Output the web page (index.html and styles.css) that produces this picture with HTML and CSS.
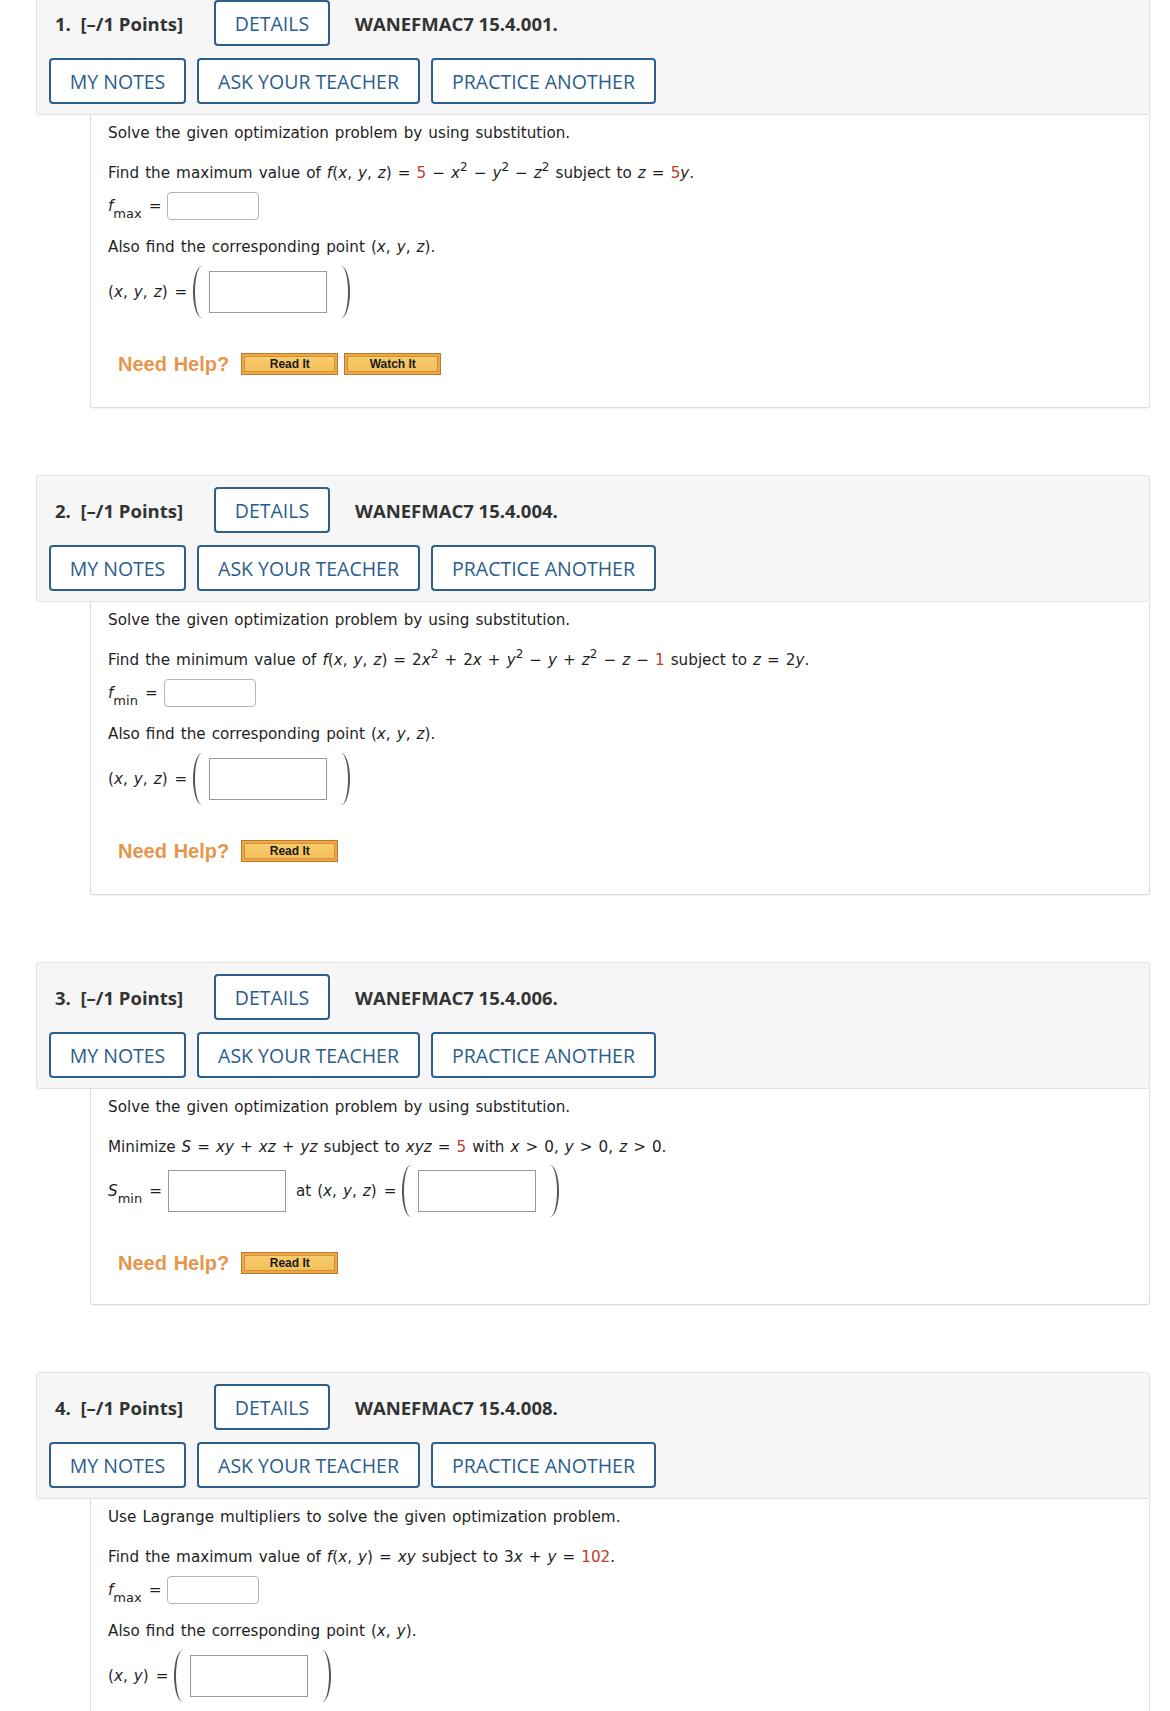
FILE: index.html
```html
<!DOCTYPE html>
<html lang="en">
<head>
  <meta charset="UTF-8" />
  <title>WebAssign - Optimization</title>
  <link rel="stylesheet" href="styles.css">
</head>
<body>
  <div class="page">

    <div class="question">
      <div class="q-head">
        <div class="q-row">
          <span class="q-num">1.&nbsp; [–/1 Points]</span>
          <button class="wa-btn details">DETAILS</button>
          <span class="q-code">WANEFMAC7 15.4.001.</span>
        </div>
        <div class="q-row">
          <button class="wa-btn notes">MY NOTES</button>
          <button class="wa-btn ask">ASK YOUR TEACHER</button>
          <button class="wa-btn practice">PRACTICE ANOTHER</button>
        </div>
      </div>
      <div class="q-body">
        <div class="line first">Solve the given optimization problem by using substitution.</div>
        <div class="line">Find the maximum value of <i>f</i>(<i>x</i>, <i>y</i>, <i>z</i>) = <span class="red">5</span> − <i>x</i><sup>2</sup> − <i>y</i><sup>2</sup> − <i>z</i><sup>2</sup> subject to <i>z</i> = <span class="red">5</span><i>y</i>.</div>
        <div class="ans-row small">
          <span><i>f</i><sub>max</sub></span><span class="eq">=</span><span class="box round"></span>
        </div>
        <div class="line after">Also find the corresponding point (<i>x</i>, <i>y</i>, <i>z</i>).</div>
        <div class="ans-row tall">
          <span>(<i>x</i>, <i>y</i>, <i>z</i>)</span><span class="eq">=</span>
          <span class="paren left"></span><span class="box wide"></span><span class="paren right"></span>
        </div>
        <div class="help">
          <span class="help-label">Need Help?</span>
          <button class="help-btn">Read It</button>
          <button class="help-btn">Watch It</button>
        </div>
      </div>
    </div>

    <div class="question">
      <div class="q-head">
        <div class="q-row">
          <span class="q-num">2.&nbsp; [–/1 Points]</span>
          <button class="wa-btn details">DETAILS</button>
          <span class="q-code">WANEFMAC7 15.4.004.</span>
        </div>
        <div class="q-row">
          <button class="wa-btn notes">MY NOTES</button>
          <button class="wa-btn ask">ASK YOUR TEACHER</button>
          <button class="wa-btn practice">PRACTICE ANOTHER</button>
        </div>
      </div>
      <div class="q-body">
        <div class="line first">Solve the given optimization problem by using substitution.</div>
        <div class="line">Find the minimum value of <i>f</i>(<i>x</i>, <i>y</i>, <i>z</i>) = 2<i>x</i><sup>2</sup> + 2<i>x</i> + <i>y</i><sup>2</sup> − <i>y</i> + <i>z</i><sup>2</sup> − <i>z</i> − <span class="red">1</span> subject to <i>z</i> = 2<i>y</i>.</div>
        <div class="ans-row small">
          <span><i>f</i><sub>min</sub></span><span class="eq">=</span><span class="box round"></span>
        </div>
        <div class="line after">Also find the corresponding point (<i>x</i>, <i>y</i>, <i>z</i>).</div>
        <div class="ans-row tall">
          <span>(<i>x</i>, <i>y</i>, <i>z</i>)</span><span class="eq">=</span>
          <span class="paren left"></span><span class="box wide"></span><span class="paren right"></span>
        </div>
        <div class="help">
          <span class="help-label">Need Help?</span>
          <button class="help-btn">Read It</button>
        </div>
      </div>
    </div>

    <div class="question">
      <div class="q-head">
        <div class="q-row">
          <span class="q-num">3.&nbsp; [–/1 Points]</span>
          <button class="wa-btn details">DETAILS</button>
          <span class="q-code">WANEFMAC7 15.4.006.</span>
        </div>
        <div class="q-row">
          <button class="wa-btn notes">MY NOTES</button>
          <button class="wa-btn ask">ASK YOUR TEACHER</button>
          <button class="wa-btn practice">PRACTICE ANOTHER</button>
        </div>
      </div>
      <div class="q-body short">
        <div class="line first">Solve the given optimization problem by using substitution.</div>
        <div class="line">Minimize <i>S</i> = <i>xy</i> + <i>xz</i> + <i>yz</i> subject to <i>xyz</i> = <span class="red">5</span> with <i>x</i> &gt; 0, <i>y</i> &gt; 0, <i>z</i> &gt; 0.</div>
        <div class="ans-row tall inline">
          <span><i>S</i><sub>min</sub></span><span class="eq">=</span><span class="box wide"></span>
          <span class="at">at (<i>x</i>, <i>y</i>, <i>z</i>)</span><span class="eq">=</span>
          <span class="paren left"></span><span class="box wide"></span><span class="paren right"></span>
        </div>
        <div class="help">
          <span class="help-label">Need Help?</span>
          <button class="help-btn">Read It</button>
        </div>
      </div>
    </div>

    <div class="question">
      <div class="q-head">
        <div class="q-row">
          <span class="q-num">4.&nbsp; [–/1 Points]</span>
          <button class="wa-btn details">DETAILS</button>
          <span class="q-code">WANEFMAC7 15.4.008.</span>
        </div>
        <div class="q-row">
          <button class="wa-btn notes">MY NOTES</button>
          <button class="wa-btn ask">ASK YOUR TEACHER</button>
          <button class="wa-btn practice">PRACTICE ANOTHER</button>
        </div>
      </div>
      <div class="q-body">
        <div class="line first">Use Lagrange multipliers to solve the given optimization problem.</div>
        <div class="line">Find the maximum value of <i>f</i>(<i>x</i>, <i>y</i>) = <i>xy</i> subject to 3<i>x</i> + <i>y</i> = <span class="red">102</span>.</div>
        <div class="ans-row small">
          <span><i>f</i><sub>max</sub></span><span class="eq">=</span><span class="box round"></span>
        </div>
        <div class="line after">Also find the corresponding point (<i>x</i>, <i>y</i>).</div>
        <div class="ans-row tall">
          <span>(<i>x</i>, <i>y</i>)</span><span class="eq">=</span>
          <span class="paren left"></span><span class="box wide"></span><span class="paren right"></span>
        </div>
        <div class="help">
          <span class="help-label">Need Help?</span>
          <button class="help-btn">Read It</button>
        </div>
      </div>
    </div>

  </div>
</body>
</html>
```

FILE: styles.css
```css
body {
  margin: 0;
  background: #fff;
  font-family: "DejaVu Sans", Verdana, sans-serif;
  color: #1e1e1e;
}
.page {
  margin-top: -12px;
  padding-bottom: 40px;
}
.question {
  width: 1114px;
  margin-left: 36px;
  margin-bottom: 67px;
}

/* header bar */
.q-head {
  background: #f6f6f6;
  border: 1px solid #e2e2e2;
  border-radius: 3px;
  padding: 11px 12px 10px;
}
.q-row {
  display: flex;
  align-items: center;
  gap: 11px;
}
.q-row + .q-row {
  margin-top: 12px;
}
.q-num,
.q-code {
  font-family: "Open Sans", sans-serif;
  font-weight: bold;
  font-size: 18.5px;
  color: #333;
  white-space: nowrap;
}
.q-num {
  width: 148px;
  flex-shrink: 0;
  margin-left: 6px;
}
.q-code {
  margin-left: 14px;
}
.wa-btn {
  height: 46px;
  padding: 0;
  background: #fff;
  border: 2px solid #2e5f8c;
  border-radius: 4px;
  color: #2b5d8b;
  font-family: "Open Sans", sans-serif;
  font-size: 19.5px;
  white-space: nowrap;
}
.wa-btn.details { width: 116px; }
.wa-btn.notes { width: 137px; }
.wa-btn.ask { width: 223px; }
.wa-btn.practice { width: 225px; }

/* question body */
.q-body {
  margin-left: 54px;
  border: 1px solid #dcdcdc;
  border-top: none;
  border-radius: 0 0 3px 3px;
  box-shadow: 0 1px 1px rgba(0, 0, 0, 0.05);
  padding: 8px 17px 32px;
  font-size: 15.2px;
  line-height: 20px;
  word-spacing: 1.2px;
}
.q-body.short {
  padding-bottom: 30px;
}
.line {
  margin-top: 20px;
}
.line.first {
  margin-top: 0;
}
.line.after {
  margin-top: 17px;
}
.red {
  color: #c23a2f;
}
sup {
  font-size: 12px;
  line-height: 0;
  vertical-align: 7px;
}
sub {
  font-size: 13px;
  line-height: 0;
  vertical-align: -7px;
}
.ans-row {
  display: flex;
  align-items: center;
}
.ans-row.small {
  margin-top: 9px;
  height: 28px;
}
.ans-row.tall {
  margin-top: 8px;
  height: 54px;
}
.ans-row.inline {
  margin-top: 7px;
}
.eq {
  margin: 0 6px 0 7px;
}
.at {
  margin-left: 10px;
}
.box {
  display: inline-block;
  background: #fff;
}
.box.round {
  width: 90px;
  height: 26px;
  border: 1px solid #b4b4b4;
  border-radius: 4px;
}
.box.wide {
  width: 116px;
  height: 40px;
  border: 1px solid #999;
}
.paren {
  display: inline-block;
  width: 9px;
  height: 52px;
}
.paren.left {
  border-left: 2px solid #555;
  border-radius: 9px 0 0 9px / 26px 0 0 26px;
  margin-right: 5px;
}
.paren.right {
  border-right: 2px solid #555;
  border-radius: 0 9px 9px 0 / 0 26px 26px 0;
  margin-left: 12px;
}

/* need help */
.help {
  display: flex;
  align-items: center;
  margin-top: 34px;
  margin-left: 10px;
  height: 22px;
}
.help-label {
  font-family: "Liberation Sans", Arial, sans-serif;
  font-weight: bold;
  font-size: 20px;
  color: #e6964a;
  margin-right: 12px;
}
.help-btn {
  width: 97px;
  height: 22px;
  margin-right: 6px;
  padding: 0;
  border: 1px solid #bd7a2e;
  background: linear-gradient(#f8cf70, #f2bd55);
  box-shadow: inset 0 0 0 2px #eda845, inset 0 0 0 3px #d2903a;
  font-family: "Liberation Sans", Arial, sans-serif;
  font-weight: bold;
  font-size: 12px;
  word-spacing: 0;
  color: #1a1a1a;
}
```
